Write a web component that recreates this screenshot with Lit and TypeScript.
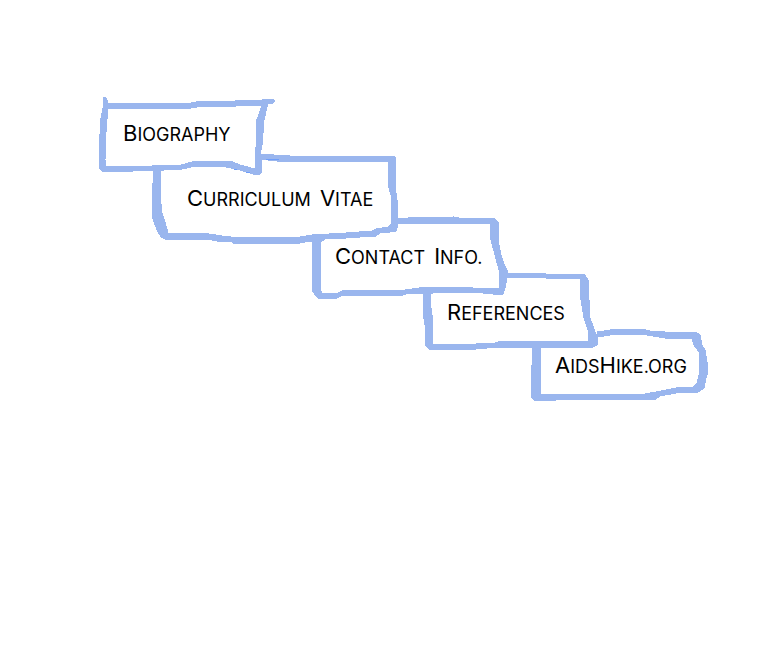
import { LitElement, html, css } from "lit";
import { customElement } from "lit/decorators.js";

interface Panel {
  name: string;
  parts: [string, string][][];
  view: string;
  frame: string;
  accents?: string;
}

// Each label is a list of words; a word is a list of [large capital, small capitals] pairs.
const panels: Panel[] = [
  {
    name: "biography",
    parts: [[["B", "iography"]]],
    view: "99 97 176 78",
    frame:
      "M103 98 105 97 107 100 108 103 191 103 202 101 235 101 235 100 262 100 264 99 273 99 275 101 273 103 268 103 266 111 264 120 263 133 262 145 260 155 262 160 261 173 259 175 253 174 240 170 222 166 196 166 182 169 164 170 152 170 133 171 129 172 102 171 99 167 99 150 100 134 101 118 103 108Z M108 108 107 119 106 132 105 160 106 166 152 167 152 165 181 165 196 161 230 161 240 165 255 169 255 155 256 147 256 122 259 114 262 105 235 105 235 106 202 106 191 108Z",
    accents: "M234 169.500h3M246 172.500h4",
  },
  {
    name: "vitae",
    parts: [[["C", "urriculum"]], [["V", "itae"]]],
    view: "151 155 248 88",
    frame:
      "M153 170 153 183 152 197 152 215 154 222 157 230 161 237 165 239 207 239 217 241 231 241 233 243 300 243 305 242 322 241 325 239 346 238 360 237 376 236 380 233 390 232 396 231 397 228 398 222 397 200 395 185 395 170 396 158 393 156 290 156 274 155 260 154 260 159 277 161 388 161 388 185 391 195 391 224 388 227 376 229 372 231 346 233 312 235 300 237 231 237 222 236 209 234 168 233 165 222 162 213 160 195 160 170Z",
    accents: "M266 159.500h13",
  },
  {
    name: "contact",
    parts: [[["C", "ontact"]], [["I", "nfo."]]],
    view: "311 217 197 82",
    frame:
      "M312 238 312 250 313 265 312 285 313 292 318 298 337 298 343 295 403 295 408 293 433 293 454 292 473 292 483 293 493 294 503 294 505 288 507 278 507 270 504 264 501 255 499 245 498 235 498 222 494 218 459 218 454 217 408 218 397 219 397 224 408 223 459 223 490 224 491 240 495 255 499 270 499 288 473 288 454 287 435 287 419 288 405 290 342 291 338 293 333 294 322 293 320 290 320 238Z",
  },
  {
    name: "references",
    parts: [[["R", "eferences"]]],
    view: "423 273 174 77",
    frame:
      "M423 291 424 300 423 312 425 325 425 345 429 349 476 349 499 347 593 347 597 345 597 337 594 329 590 318 589 300 588 280 585 275 545 274 545 273 506 273 506 277 545 278 580 279 581 300 584 318 588 330 589 341 501 341 495 343 476 344 433 344 432 315 430 300 431 291Z",
  },
  {
    name: "aidshike",
    parts: [[["A", "ids"], ["H", "ike.org"]]],
    view: "531 329 177 72",
    frame:
      "M532 346 532 365 531 380 531 396 534 400 556 400 568 399 656 399 660 396 676 393 698 392 704 388 706 378 708 372 707 362 705 350 702 345 700 335 697 333 665 332 650 331 641 329 617 329 597 332 597 337 617 334 641 334 665 338 692 338 694 345 699 352 699 375 697 383 693 387 676 388 656 392 645 394 568 394 540 395 540 346Z",
  },
];

@customElement("app-root")
export class AppRoot extends LitElement {
  static styles = css`
    :host {
      display: block;
      min-height: 100vh;
      background: #fff;
    }
    nav {
      display: flex;
      flex-direction: column;
      align-items: flex-start;
      padding: 97px 0 0 99px;
    }
    a {
      position: relative;
      box-sizing: border-box;
      height: 56px;
      padding: 24px 24px 0;
      color: #000;
      font: 18px/24px Inter, sans-serif;
      text-transform: uppercase;
      text-decoration: none;
      white-space: nowrap;
    }
    a:focus-visible {
      outline: 1px dotted #000;
    }
    .biography {
      height: 58px;
    }
    .vitae {
      height: 62px;
      margin-left: 52px;
      padding: 31px 36px 0;
    }
    .contact {
      margin-left: 212px;
      padding-top: 27px;
    }
    .references {
      margin-left: 324px;
      padding-top: 27px;
    }
    .aidshike {
      height: 72px;
      margin-left: 432px;
    }
    .cap {
      font-size: 22px;
    }
    .label {
      position: relative;
    }
    .word + .word {
      margin-left: 4px;
    }
    svg {
      position: absolute;
      top: 0;
      left: 0;
      overflow: visible;
      fill: #9ab6ee;
      fill-rule: evenodd;
      stroke: #9ab6ee;
      stroke-width: 1px;
      shape-rendering: crispEdges;
    }
    .accent {
      stroke: #6e9efa;
    }
  `;

  private panel(p: Panel) {
    const [, , w, h] = p.view.split(" ");
    const words = p.parts.map(
      (word, i) =>
        html`${i ? " " : ""}<span class="word"
            >${word.map(
              ([cap, rest]) => html`<span class="cap">${cap}</span>${rest}`
            )}</span
          >`
    );
    return html`<a class=${p.name} href="#${p.name}"
      ><svg width=${w} height=${h} viewBox=${p.view} aria-hidden="true">
        <path d=${p.frame}></path>
        <path class="accent" d=${p.accents ?? ""}></path></svg
      ><span class="label">${words}</span></a
    >`;
  }

  render() {
    return html`<nav aria-label="Main">${panels.map((p) => this.panel(p))}</nav>`;
  }
}
